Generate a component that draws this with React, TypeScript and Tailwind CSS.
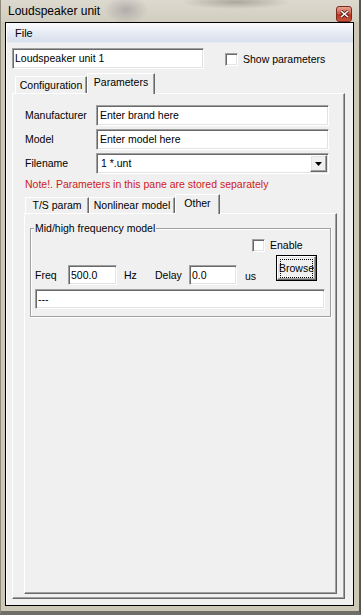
import React from "react";

const sunken =
  "bg-white border border-t-[#a0a0a0] border-l-[#a0a0a0] border-r-white border-b-white shadow-[inset_1px_1px_0_#696969,inset_-1px_-1px_0_#e3e3e3]";
const raised =
  "bg-[#f0f0f0] border border-t-white border-l-white border-r-[#696969] border-b-[#696969] shadow-[inset_-1px_-1px_0_#a0a0a0,inset_1px_1px_0_#e3e3e3]";
const panel =
  "border border-t-white border-l-white border-r-[#696969] border-b-[#696969] shadow-[inset_-1px_-1px_0_#a0a0a0]";

function Edit({ children, className }: { children?: React.ReactNode; className: string }) {
  return <div className={`flex items-center pl-[2px] whitespace-nowrap ${sunken} ${className}`}>{children}</div>;
}

function Check() {
  return <div className={`w-[13px] h-[13px] ${sunken}`} />;
}

function Tab({ label, active, className }: { label: string; active?: boolean; className: string }) {
  return (
    <div
      className={`flex items-center justify-center whitespace-nowrap bg-[#f0f0f0] border-t border-l border-r border-t-white border-l-white border-r-[#696969] shadow-[inset_-1px_0_0_#a0a0a0] ${
        active ? "relative z-10 -mb-px pb-[3px]" : ""
      } ${className}`}
    >
      {label}
    </div>
  );
}

function FormRow({ label, children, first }: { label: string; children: React.ReactNode; first?: boolean }) {
  return (
    <div className={`flex items-center pl-[1px] ${first ? "" : "mt-[3px]"}`}>
      <span className="w-[71px]">{label}</span>
      {children}
    </div>
  );
}

export default function App() {
  return (
    <div className="w-[361px] h-[615px] flex flex-col bg-[#ccc8b5] border-l border-l-[#8f8b7c] border-r-2 border-r-[#55544f] border-b-4 border-b-[#6f6e68] font-[family-name:'Liberation_Sans',Arial,sans-serif] text-[10.5px] leading-[13px] text-black overflow-hidden">
      {/* Title bar (aero glass) */}
      <div className="h-[22px] flex items-start justify-between pl-[7px] pr-[7px] bg-[image:radial-gradient(ellipse_22px_14px_at_125px_10px,rgba(110,100,115,0.35),transparent),radial-gradient(ellipse_55px_7px_at_235px_2px,rgba(80,80,70,0.35),transparent),linear-gradient(to_bottom,#dcd9cf,#d2cec0)]">
        <span className="mt-[4px] text-[12px] leading-[15px]">Loudspeaker unit</span>
        <div className="mt-[6px] w-[16px] h-[16px] rounded-[3px] border border-[#7b2a1e] bg-[image:linear-gradient(to_bottom,#e8a393,#d0604b_45%,#b8321f_55%,#c9553f)] flex items-center justify-center">
          <svg width="9" height="8" viewBox="0 0 9 8">
            <path d="M1 1L8 7M8 1L1 7" stroke="#4a1a12" strokeWidth="3" />
            <path d="M1 1L8 7M8 1L1 7" stroke="#fff" strokeWidth="1.6" />
          </svg>
        </div>
      </div>

      {/* Client area */}
      <div className="ml-[4px] w-[349px] h-[584px] border border-black flex">
        <div className="flex-1 flex flex-col border-l border-l-white bg-[#f0f0f0]">
          <div className="h-[20px] flex items-center pl-[8px] text-[11px] bg-[image:linear-gradient(to_bottom,#fbfcfe,#e6ebf4_50%,#d9e0ec_92%,#eef1f6)]">
            File
          </div>

          <div className="flex-1 flex flex-col pl-[5px] pt-[5px] pb-[6px]">
            <div className="flex items-start">
              <Edit className="w-[192px] h-[21px]">Loudspeaker unit 1</Edit>
              <div className="ml-[21px] mt-[5px] flex items-center">
                <Check />
                <span className="ml-[5px]">Show parameters</span>
              </div>
            </div>

            {/* Outer tabs */}
            <div className="mt-[4px] h-[20px] flex items-end pl-[3px]">
              <Tab label="Configuration" className="w-[72px] h-[17px]" />
              <Tab label="Parameters" active className="w-[68px] h-[21px]" />
            </div>

            <div className={`w-[333px] flex-1 flex flex-col pl-[11px] pt-[11px] pb-[4px] ${panel}`}>
              <FormRow label="Manufacturer" first>
                <Edit className="w-[233px] h-[21px] pl-[3px]">Enter brand here</Edit>
              </FormRow>
              <FormRow label="Model">
                <Edit className="w-[233px] h-[21px] pl-[3px]">Enter model here</Edit>
              </FormRow>
              <FormRow label="Filename">
                <div className={`w-[233px] h-[21px] flex items-center ${sunken}`}>
                  <span className="flex-1 pl-[4px]">1 *.unt</span>
                  <div className={`w-[17px] h-[17px] mr-px flex items-center justify-center ${raised}`}>
                    <svg width="7" height="4" viewBox="0 0 7 4">
                      <path d="M0 0H7L3.5 4Z" fill="#000" />
                    </svg>
                  </div>
                </div>
              </FormRow>

              <div className="mt-[4px] pl-[1px] text-[#cd1b1b]">Note!. Parameters in this pane are stored separately</div>

              {/* Inner tabs */}
              <div className="mt-[3px] h-[19px] flex items-end pl-[1px]">
                <Tab label="T/S param" className="w-[64px] h-[16px]" />
                <Tab label="Nonlinear model" className="w-[86px] h-[16px]" />
                <Tab label="Other" active className="w-[45px] h-[20px]" />
              </div>

              <div className={`w-[313px] flex-1 pl-[5px] pt-[14px] ${panel}`}>
                <div className="w-[301px] flex flex-col pb-[7px] border border-[#a0a0a0] shadow-[inset_1px_1px_0_#fff,1px_1px_0_#fff]">
                  <span className="-mt-[7px] ml-[3px] px-[1px] self-start bg-[#f0f0f0]">Mid/high frequency model</span>

                  <div className="mt-[4px] ml-[221px] flex items-center">
                    <Check />
                    <span className="ml-[5px]">Enable</span>
                  </div>

                  <div className="mt-[3px] h-[30px] flex items-start">
                    <div className="mt-[10px] ml-[4px] h-[20px] flex items-center">
                      <span className="w-[33px]">Freq</span>
                      <Edit className="w-[49px] h-[20px]">500.0</Edit>
                      <span className="ml-[7px] w-[31px]">Hz</span>
                      <span className="w-[34px]">Delay</span>
                      <Edit className="w-[48px] h-[20px]">0.0</Edit>
                      <span className="ml-[8px] w-[31px] pt-[2px]">us</span>
                    </div>
                    <div className="w-[41px] h-[26px] border border-black">
                      <div className={`w-full h-full flex items-center justify-center ${raised}`}>
                        <div className="w-[33px] h-[19px] border border-dotted border-black flex items-center justify-center">
                          Browse
                        </div>
                      </div>
                    </div>
                  </div>

                  <div className="mt-[4px] ml-[4px]">
                    <Edit className="w-[290px] h-[20px]">---</Edit>
                  </div>
                </div>
              </div>
            </div>
          </div>
        </div>
      </div>
    </div>
  );
}
